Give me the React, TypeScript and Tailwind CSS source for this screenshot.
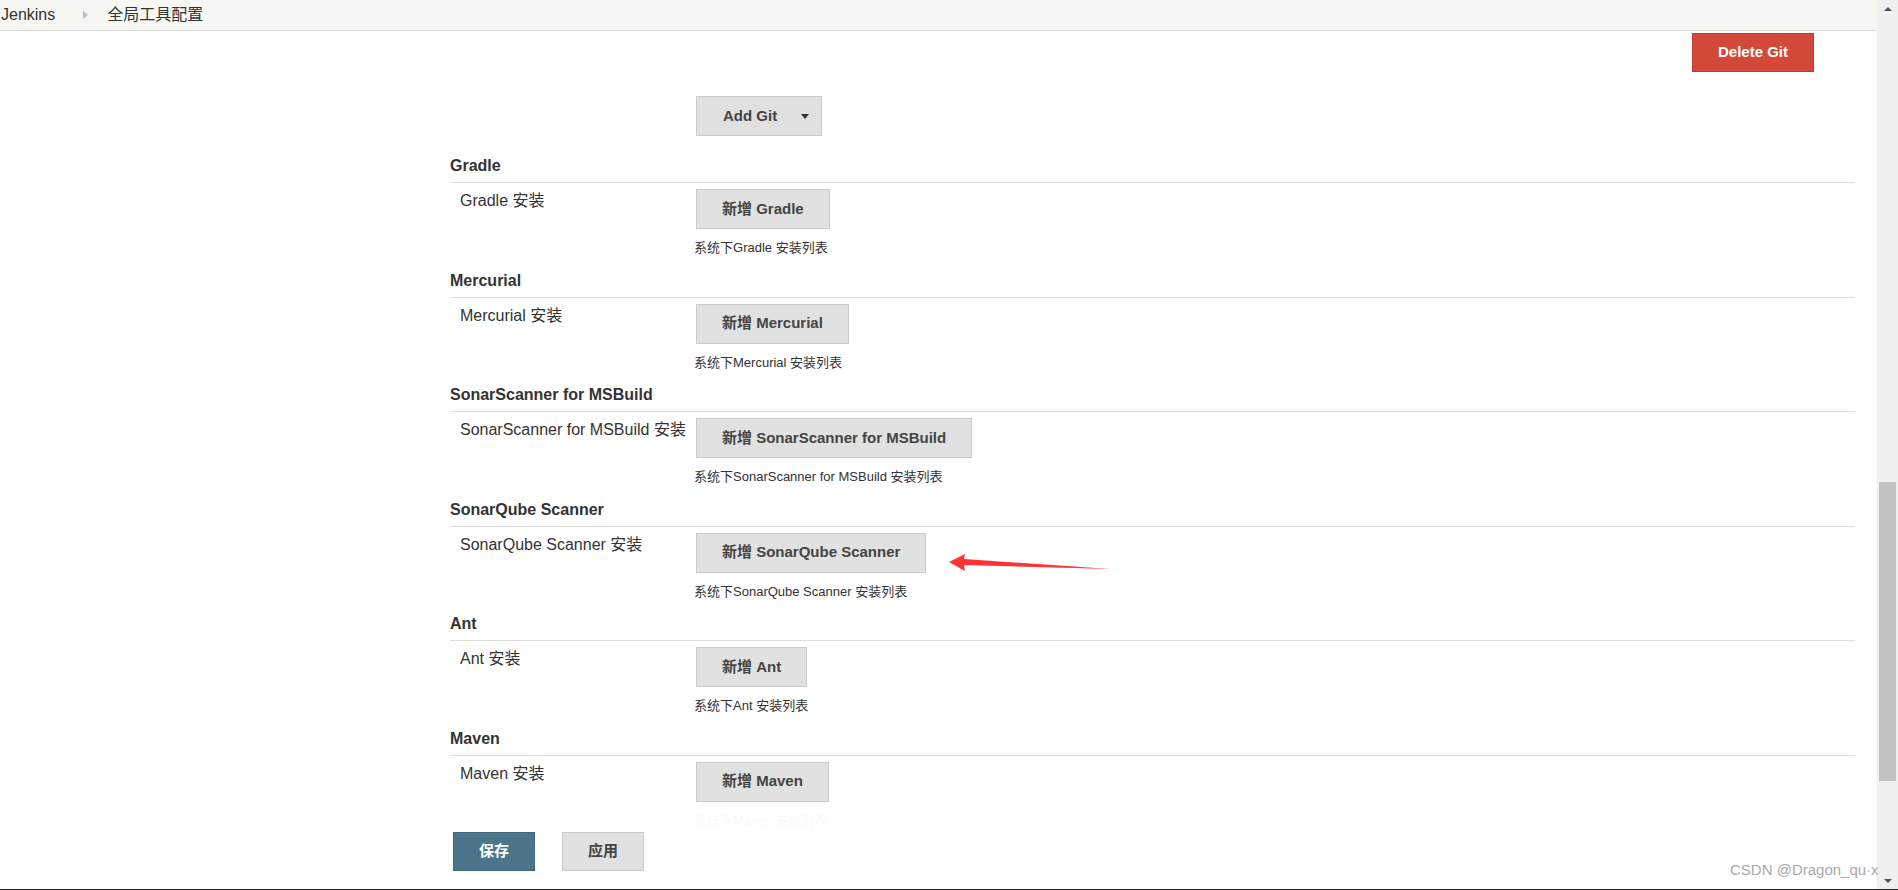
import React from "react";

interface ToolSection {
  name: string;
  label: string;
}

const sections: ToolSection[] = [
  { name: "Gradle", label: "Gradle" },
  { name: "Mercurial", label: "Mercurial" },
  { name: "SonarScanner for MSBuild", label: "SonarScanner for MSBuild" },
  { name: "SonarQube Scanner", label: "SonarQube Scanner" },
  { name: "Ant", label: "Ant" },
  { name: "Maven", label: "Maven" },
];

const GrayButton: React.FC<{ children: React.ReactNode; className?: string }> = ({
  children,
  className = "",
}) => (
  <button
    type="button"
    className={`flex h-[40px] items-center border border-[#cbcbcb] bg-[#e1e1e1] text-[15px] font-bold text-[#444] ${className}`}
  >
    {children}
  </button>
);

const Section: React.FC<{ section: ToolSection }> = ({ section }) => (
  <section>
    <div className="border-b border-[#dedede] pb-[6px] pt-[1px] text-[16px] font-bold leading-[20px] text-[#333]">
      {section.name}
    </div>
    <div className="mt-[6px] flex">
      <div className="w-[246px] shrink-0 pl-[10px] pt-[2px] text-[16px] leading-[20px] text-[#333]">
        {section.label} 安装
      </div>
      <div className="flex flex-col items-start">
        <GrayButton className="px-[25px]">新增 {section.label}</GrayButton>
        <div className="-ml-[2px] mt-[11px] text-[13px] leading-[16px] text-[#333]">
          系统下{section.label} 安装列表
        </div>
      </div>
    </div>
  </section>
);

const Scrollbar: React.FC = () => (
  <div className="flex h-full w-[21px] shrink-0 flex-col bg-[#f0f0f0]">
    <div className="flex h-[17px] items-center justify-center">
      <div className="h-0 w-0 border-x-[4px] border-b-[4px] border-x-transparent border-b-[#505050]" />
    </div>
    <div className="mx-[2px] mt-[465px] h-[299px] bg-[#c1c1c1]" />
    <div className="flex-1" />
    <div className="flex h-[17px] items-center justify-center">
      <div className="h-0 w-0 border-x-[4px] border-t-[4px] border-x-transparent border-t-[#505050]" />
    </div>
  </div>
);

export default function App() {
  return (
    <div className="flex h-[890px] w-full flex-col overflow-hidden bg-white font-['Liberation_Sans','Noto_Sans_CJK_SC',sans-serif] text-[#333]">
      <div className="relative flex min-h-0 flex-1">
        <div className="flex min-w-0 flex-1 flex-col overflow-hidden">
          <header className="flex h-[31px] shrink-0 items-center border-b border-[#d9d9d9] bg-[#f6f7f2] pl-px text-[16px] text-[#333]">
            <span>Jenkins</span>
            <span className="ml-[28px] h-0 w-0 border-y-[4px] border-l-[5px] border-y-transparent border-l-[#bdbdbd]" />
            <span className="ml-[19px]">全局工具配置</span>
          </header>

          <main className="pl-[450px] pr-[22px]">
            <div className="mt-[2px] flex justify-end pr-[41px]">
              <button
                type="button"
                className="h-[39px] w-[122px] border border-[#c13d2e] bg-[#d24939] text-[15px] font-bold text-white"
              >
                Delete Git
              </button>
            </div>

            <div className="ml-[246px] mt-[24px]">
              <GrayButton className="pl-[26px] pr-[12px]">
                Add Git
                <span className="ml-[24px] h-0 w-0 border-x-[4.5px] border-t-[5px] border-x-transparent border-t-[#333]" />
              </GrayButton>
            </div>

            <div className="mt-[19px] flex flex-col gap-[13.5px]">
              {sections.map((s) => (
                <Section key={s.name} section={s} />
              ))}
            </div>
          </main>
        </div>

        <Scrollbar />

        {/* sticky save bar */}
        <div className="absolute bottom-0 left-0 right-[21px] h-[84px] bg-white/[0.97]">
          <div className="flex gap-[27px] pl-[453px] pt-[27px]">
            <button
              type="button"
              className="h-[39px] w-[82px] border border-[#42687c] bg-[#4b758b] text-[15px] font-bold text-white"
            >
              保存
            </button>
            <button
              type="button"
              className="h-[39px] w-[82px] border border-[#cbcbcb] bg-[#e1e1e1] text-[15px] font-bold text-[#444]"
            >
              应用
            </button>
          </div>
        </div>

        {/* annotation arrow */}
        <svg
          className="absolute left-[948px] top-[552px]"
          width="164"
          height="21"
          viewBox="0 0 164 21"
        >
          <polygon points="1,10 17,2 16,7 162,17 16,13 17,19" fill="#f33" />
        </svg>

        <div className="absolute left-[1730px] top-[861px] text-[15px] leading-[17px] text-[#a9a9a9]">
          CSDN @Dragon_qu·x
        </div>
      </div>
      <div className="h-px shrink-0 bg-[#222]" />
    </div>
  );
}
